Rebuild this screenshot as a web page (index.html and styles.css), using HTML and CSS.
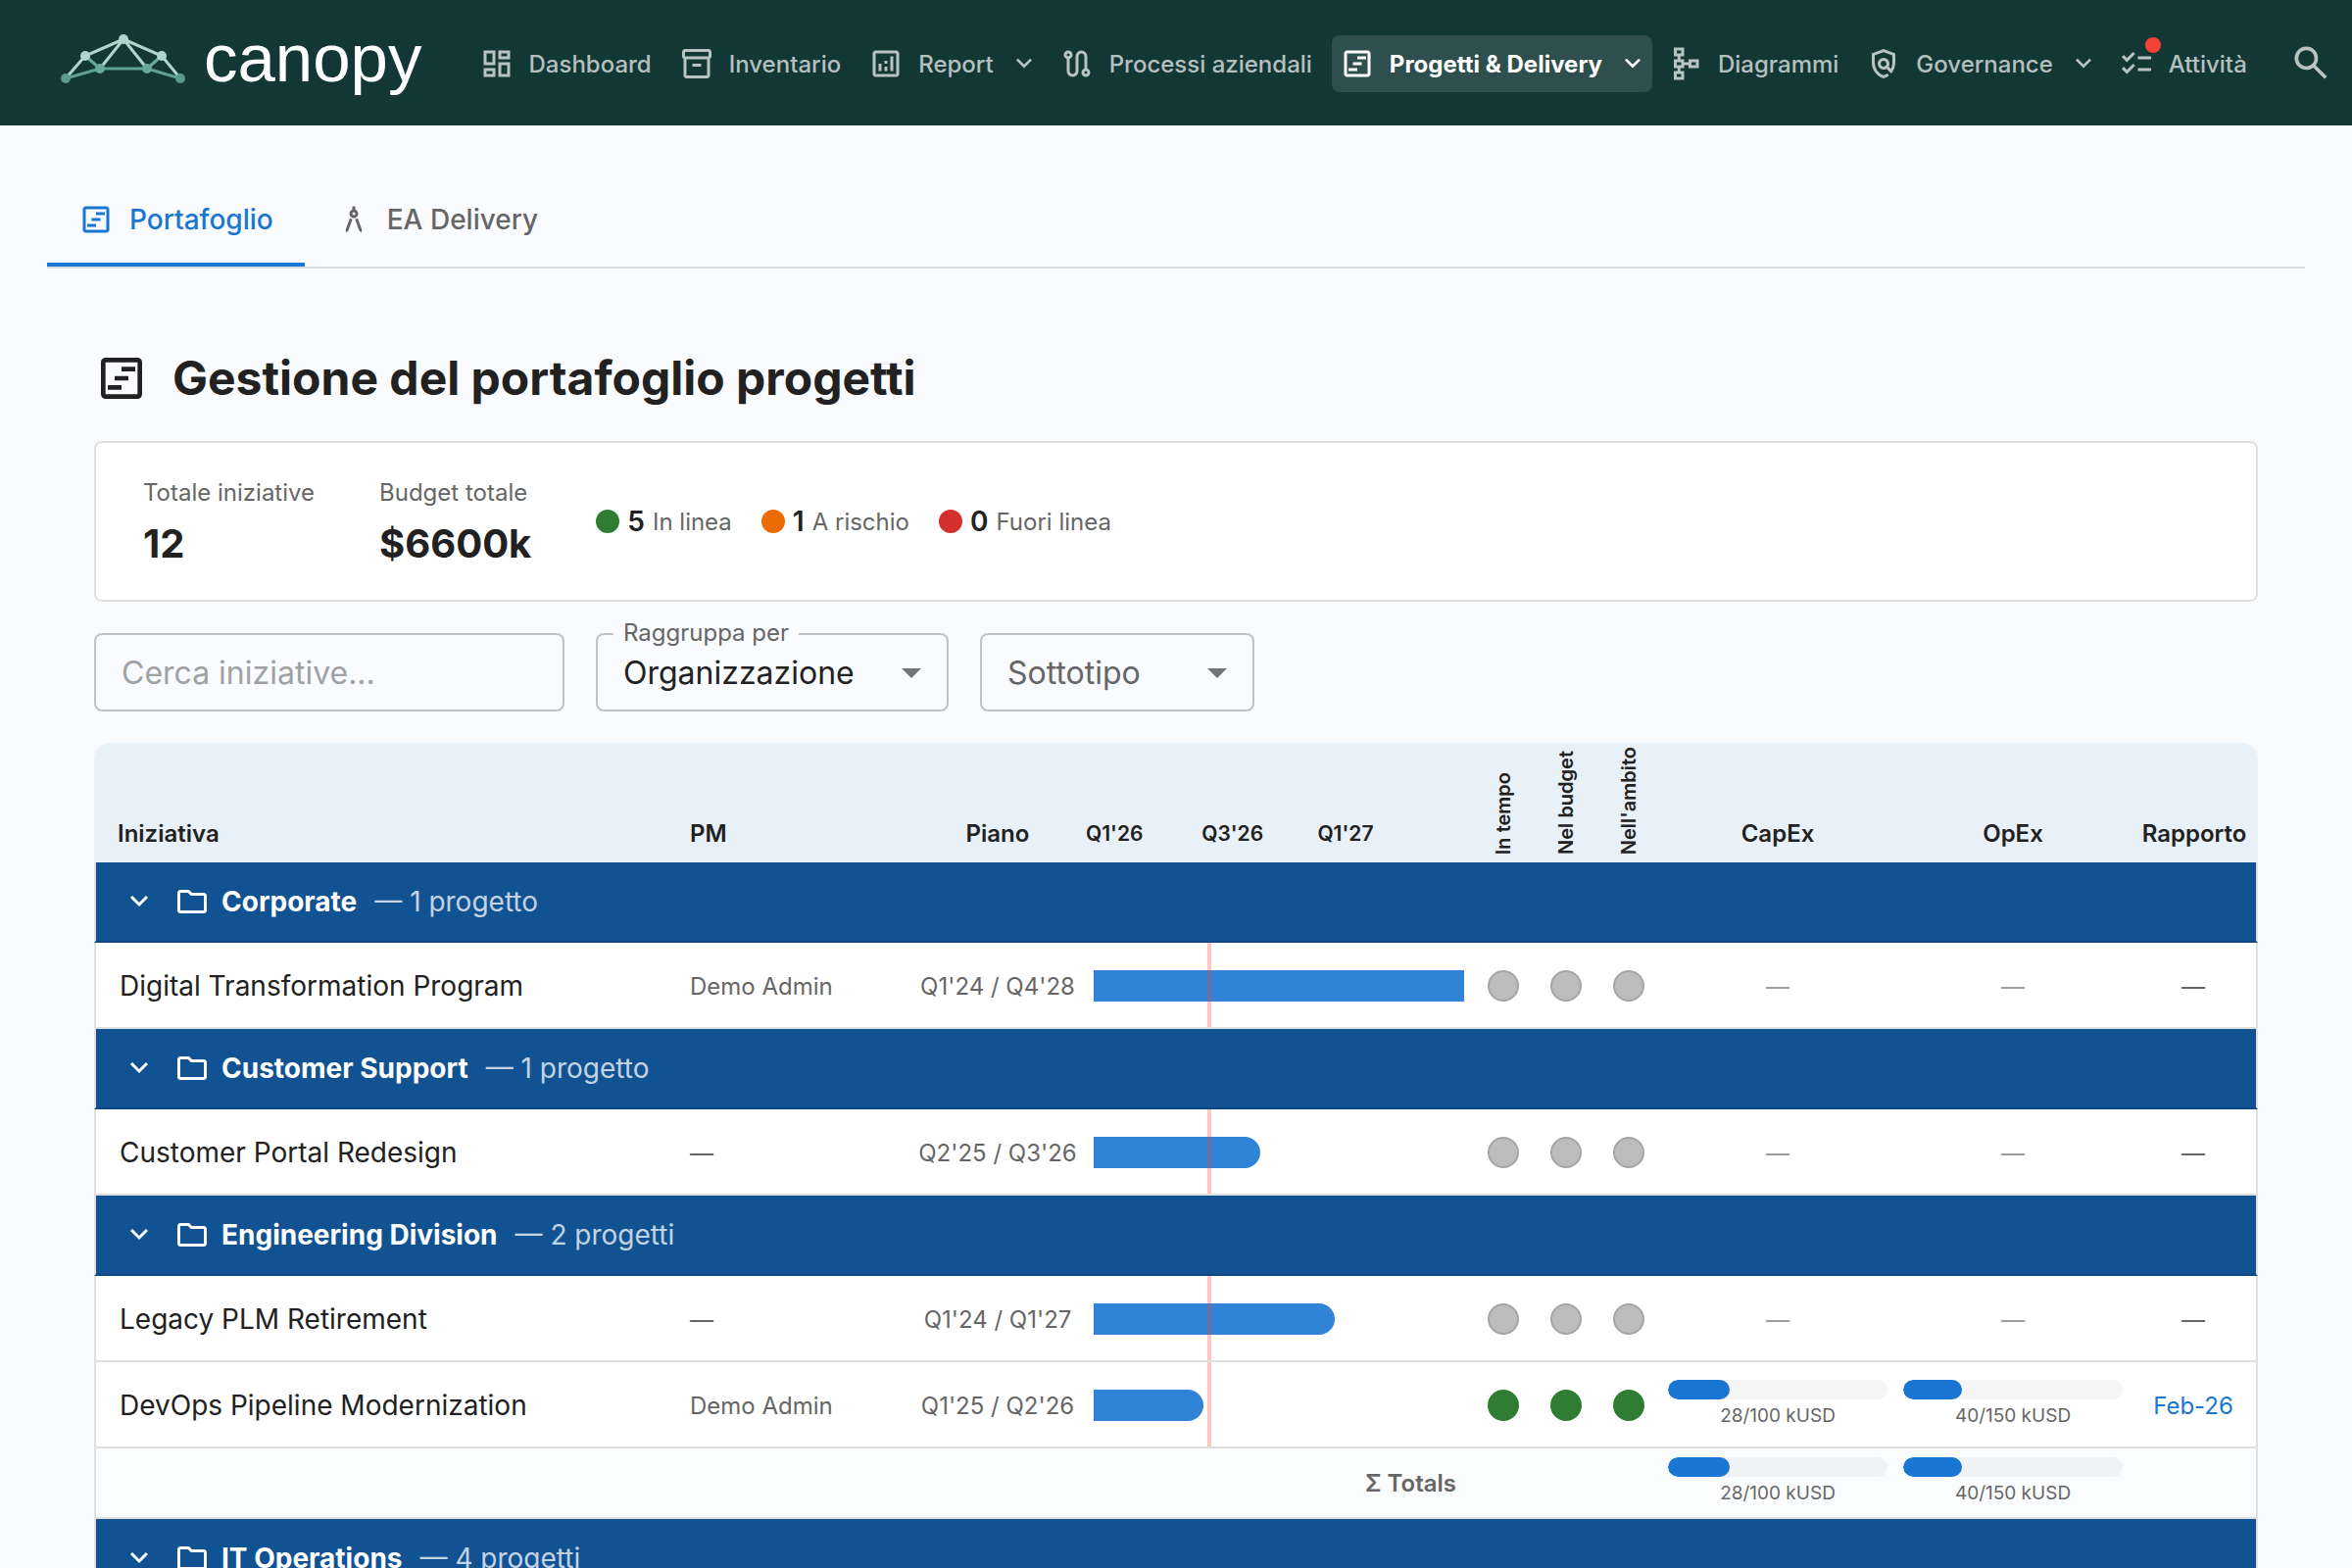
FILE: index.html
```html
<!DOCTYPE html>
<html lang="it">
<head>
    <meta charset="UTF-8">
    <meta name="viewport" content="width=device-width, initial-scale=1.0">
    <title>Canopy - Gestione del portafoglio progetti</title>
    <link rel="stylesheet" href="styles.css">
</head>
<body>
    <!-- shared icon shapes -->
    <svg class="sprite" aria-hidden="true">
        <symbol id="i-dashboard" viewBox="0 -960 960 960"><path d="M520-600v-240h320v240H520ZM120-440v-400h320v400H120Zm400 320v-400h320v400H520Zm-400 0v-240h320v240H120Zm80-400h160v-240H200v240Zm400 320h160v-240H600v240Zm0-480h160v-80H600v80ZM200-200h160v-80H200v80Z"/></symbol>
        <symbol id="i-inventory" viewBox="0 -960 960 960"><path d="M200-80q-33 0-56.5-23.5T120-160v-451q-18-11-29-28.5T80-680v-120q0-33 23.5-56.5T160-880h640q33 0 56.5 23.5T880-800v120q0 23-11 40.5T840-611v451q0 33-23.5 56.5T760-80H200Zm0-520v440h560v-440H200Zm-40-80h640v-120H160v120Zm200 280h240v-80H360v80Z"/></symbol>
        <symbol id="i-report" viewBox="0 -960 960 960"><path d="M280-280h80v-200h-80v200Zm320 0h80v-400h-80v400Zm-160 0h80v-120h-80v120Zm0-200h80v-80h-80v80ZM200-120q-33 0-56.5-23.5T120-200v-560q0-33 23.5-56.5T200-840h560q33 0 56.5 23.5T840-760v560q0 33-23.5 56.5T760-120H200Zm0-80h560v-560H200v560Z"/></symbol>
        <symbol id="i-route" viewBox="0 -960 960 960"><path d="M360-120q-66 0-113-47t-47-113v-327q-35-13-57.5-43.5T120-720q0-50 35-85t85-35q50 0 85 35t35 85q0 39-22.5 69.5T280-607v327q0 33 23.5 56.5T360-200q33 0 56.5-23.5T440-280v-400q0-66 47-113t113-47q66 0 113 47t47 113v327q35 13 57.5 43.5T840-240q0 50-35 85t-85 35q-50 0-85-35t-35-85q0-39 22.5-70t57.5-43v-327q0-33-23.5-56.5T600-760q-33 0-56.5 23.5T520-680v400q0 66-47 113t-113 47ZM240-680q17 0 28.5-11.5T280-720q0-17-11.5-28.5T240-760q-17 0-28.5 11.5T200-720q0 17 11.5 28.5T240-680Zm480 480q17 0 28.5-11.5T760-240q0-17-11.5-28.5T720-280q-17 0-28.5 11.5T680-240q0 17 11.5 28.5T720-200Z"/></symbol>
        <symbol id="i-timeline" viewBox="0 -960 960 960"><path d="M240-280h240v-80H240v80Zm120-160h240v-80H360v80Zm120-160h240v-80H480v80ZM200-120q-33 0-56.5-23.5T120-200v-560q0-33 23.5-56.5T200-840h560q33 0 56.5 23.5T840-760v560q0 33-23.5 56.5T760-120H200Zm0-80h560v-560H200v560Z"/></symbol>
        <symbol id="i-schema" viewBox="0 -960 960 960"><path d="M160-40v-240h100v-80H160v-240h100v-80H160v-240h280v240H340v80h100v80h120v-80h280v240H560v-80H440v80H340v80h100v240H160Zm80-80h120v-80H240v80Zm0-320h120v-80H240v80Zm400 0h120v-80H640v80ZM240-760h120v-80H240v80Z"/></symbol>
        <symbol id="i-policy" viewBox="0 -960 960 960"><path d="M480-80q-139-35-229.5-159.5T160-516v-244l320-120 320 120v244q0 85-29 163.5T688-214L560-342q-18 11-38.5 16.5T480-320q-66 0-113-47t-47-113q0-66 47-113t113-47q66 0 113 47t47 113q0 22-5.5 42.5T618-398l60 60q20-41 31-86t11-92v-189l-240-90-240 90v189q0 121 68 220t172 132q26-8 49.5-20.5T576-214l56 56q-33 27-71.5 47T480-80Zm0-320q33 0 56.5-23.5T560-480q0-33-23.5-56.5T480-560q-33 0-56.5 23.5T400-480q0 33 23.5 56.5T480-400Z"/></symbol>
        <symbol id="i-checklist" viewBox="0 -960 960 960"><path d="M222-200 80-342l56-56 85 85 170-170 56 57-225 226Zm0-320L80-662l56-56 85 85 170-170 56 57-225 226Zm298 240v-80h360v80H520Zm0-320v-80h360v80H520Z"/></symbol>
        <symbol id="i-search" viewBox="0 -960 960 960"><path d="M784-120 532-372q-30 24-69 38t-83 14q-109 0-184.5-75.5T120-580q0-109 75.5-184.5T380-840q109 0 184.5 75.5T640-580q0 44-14 83t-38 69l252 252-56 56ZM380-400q75 0 127.5-52.5T560-580q0-75-52.5-127.5T380-760q-75 0-127.5 52.5T200-580q0 75 52.5 127.5T380-400Z"/></symbol>
        <symbol id="i-chevron" viewBox="0 -960 960 960"><path d="M480-344 240-584l56-56 184 184 184-184 56 56-240 240Z"/></symbol>
        <symbol id="i-compass" viewBox="0 -960 960 960"><path d="m270-120-10-88 114-314q15 14 32.5 23.5T444-484L334-182l-64 62Zm420 0-64-62-110-302q20-5 37.5-14.5T586-522l114 314-10 88ZM480-520q-50 0-85-35t-35-85q0-39 22.5-69.5T440-752v-88h80v88q35 12 57.5 42.5T600-640q0 50-35 85t-85 35Zm0-80q17 0 28.5-11.5T520-640q0-17-11.5-28.5T480-680q-17 0-28.5 11.5T440-640q0 17 11.5 28.5T480-600Z"/></symbol>
        <symbol id="i-folder" viewBox="0 -960 960 960"><path d="M160-160q-33 0-56.5-23.5T80-240v-480q0-33 23.5-56.5T160-800h240l80 80h320q33 0 56.5 23.5T880-640v400q0 33-23.5 56.5T800-160H160Zm0-80h640v-400H447l-80-80H160v480Z"/></symbol>
    </svg>

    <header class="topbar">
        <a class="logo" href="#">
            <svg class="logo-mark" viewBox="0 0 132 60" aria-hidden="true">
                <g fill="none" stroke-width="3">
                    <path d="M27 27 42 40M105 27 90 40" stroke="#68a89f"/>
                    <path d="M7 50 42 40H90L124 50" stroke="#5fa197"/>
                    <path d="M7 50 27 27 66 10 105 27 124 50M66 10 42 40M66 10 90 40" stroke="#b0d4ce"/>
                </g>
                <circle cx="7" cy="50" r="5" fill="#5a9a90"/>
                <circle cx="124" cy="50" r="5" fill="#5a9a90"/>
                <circle cx="42" cy="40" r="5" fill="#68a89f"/>
                <circle cx="90" cy="40" r="5" fill="#68a89f"/>
                <circle cx="27" cy="27" r="5" fill="#b0d4ce"/>
                <circle cx="105" cy="27" r="5" fill="#b0d4ce"/>
                <circle cx="66" cy="10" r="5" fill="#b0d4ce"/>
            </svg>
            <span class="logo-text">canopy</span>
        </a>
        <nav class="nav">
            <a class="nav-item" href="#"><svg class="icon"><use href="#i-dashboard"/></svg>Dashboard</a>
            <a class="nav-item" href="#"><svg class="icon"><use href="#i-inventory"/></svg>Inventario</a>
            <button class="nav-item has-menu" type="button"><svg class="icon"><use href="#i-report"/></svg>Report<svg class="chevron"><use href="#i-chevron"/></svg></button>
            <a class="nav-item" href="#"><svg class="icon"><use href="#i-route"/></svg>Processi aziendali</a>
            <button class="nav-item has-menu active" type="button"><svg class="icon"><use href="#i-timeline"/></svg>Progetti &amp; Delivery<svg class="chevron"><use href="#i-chevron"/></svg></button>
            <a class="nav-item" href="#"><svg class="icon"><use href="#i-schema"/></svg>Diagrammi</a>
            <button class="nav-item has-menu" type="button"><svg class="icon"><use href="#i-policy"/></svg>Governance<svg class="chevron"><use href="#i-chevron"/></svg></button>
            <a class="nav-item" href="#"><span class="badge-wrap"><svg class="icon"><use href="#i-checklist"/></svg><span class="badge"></span></span>Attività</a>
        </nav>
        <button class="search-button" type="button" aria-label="Cerca"><svg><use href="#i-search"/></svg></button>
    </header>

    <main class="page">
        <div class="tabs" role="tablist">
            <button class="tab selected" type="button" role="tab" aria-selected="true"><svg class="icon"><use href="#i-timeline"/></svg>Portafoglio</button>
            <button class="tab" type="button" role="tab" aria-selected="false"><svg class="icon"><use href="#i-compass"/></svg>EA Delivery</button>
        </div>

        <section class="content">
            <h1 class="title"><svg class="title-icon"><use href="#i-timeline"/></svg>Gestione del portafoglio progetti</h1>

            <div class="summary">
                <div class="stat">
                    <div class="stat-label">Totale iniziative</div>
                    <div class="stat-value">12</div>
                </div>
                <div class="stat">
                    <div class="stat-label">Budget totale</div>
                    <div class="stat-value">$6600k</div>
                </div>
                <div class="health">
                    <div class="health-item"><span class="dot green"></span><strong>5</strong><span>In linea</span></div>
                    <div class="health-item"><span class="dot orange"></span><strong>1</strong><span>A rischio</span></div>
                    <div class="health-item"><span class="dot red"></span><strong>0</strong><span>Fuori linea</span></div>
                </div>
            </div>

            <form class="filters">
                <input class="field search" type="text" placeholder="Cerca iniziative..." aria-label="Cerca iniziative">
                <div class="select-wrap group-by">
                    <label class="float-label" for="groupBy">Raggruppa per</label>
                    <select class="field" id="groupBy">
                        <option>Organizzazione</option>
                    </select>
                </div>
                <div class="select-wrap subtype">
                    <select class="field muted" id="subtype" aria-label="Sottotipo">
                        <option>Sottotipo</option>
                    </select>
                </div>
            </form>

            <table class="portfolio">
                <colgroup>
                    <col>
                    <col class="col-pm">
                    <col class="col-plan">
                    <col class="col-time">
                    <col class="col-rag">
                    <col class="col-rag">
                    <col class="col-rag">
                    <col class="col-cost">
                    <col class="col-cost">
                    <col class="col-report">
                </colgroup>
                <thead>
                    <tr>
                        <th class="name">Iniziativa</th>
                        <th class="pm">PM</th>
                        <th>Piano</th>
                        <th class="quarters"><div class="scale"><span>Q1'26</span><span>Q3'26</span><span>Q1'27</span></div></th>
                        <th class="rag"><span class="vertical">In tempo</span></th>
                        <th class="rag"><span class="vertical">Nel budget</span></th>
                        <th class="rag"><span class="vertical">Nell'ambito</span></th>
                        <th>CapEx</th>
                        <th>OpEx</th>
                        <th>Rapporto</th>
                    </tr>
                </thead>
                <tbody>
                    <tr class="group">
                        <td colspan="10"><button class="group-toggle" type="button"><svg class="icon"><use href="#i-chevron"/></svg><svg class="icon folder"><use href="#i-folder"/></svg><strong>Corporate</strong><span class="count">— 1 progetto</span></button></td>
                    </tr>
                    <tr class="project">
                        <td class="name">Digital Transformation Program</td>
                        <td class="pm">Demo Admin</td>
                        <td class="plan">Q1'24 / Q4'28</td>
                        <td class="timeline"><div class="track"><div class="bar open" style="width: 100%"></div><div class="today" style="left: 30.7%"></div></div></td>
                        <td class="rag"><span class="status"></span></td>
                        <td class="rag"><span class="status"></span></td>
                        <td class="rag"><span class="status"></span></td>
                        <td class="cost empty">—</td>
                        <td class="cost empty">—</td>
                        <td class="report">—</td>
                    </tr>
                    <tr class="group">
                        <td colspan="10"><button class="group-toggle" type="button"><svg class="icon"><use href="#i-chevron"/></svg><svg class="icon folder"><use href="#i-folder"/></svg><strong>Customer Support</strong><span class="count">— 1 progetto</span></button></td>
                    </tr>
                    <tr class="project">
                        <td class="name">Customer Portal Redesign</td>
                        <td class="pm">—</td>
                        <td class="plan">Q2'25 / Q3'26</td>
                        <td class="timeline"><div class="track"><div class="bar" style="width: 45%"></div><div class="today" style="left: 30.7%"></div></div></td>
                        <td class="rag"><span class="status"></span></td>
                        <td class="rag"><span class="status"></span></td>
                        <td class="rag"><span class="status"></span></td>
                        <td class="cost empty">—</td>
                        <td class="cost empty">—</td>
                        <td class="report">—</td>
                    </tr>
                    <tr class="group">
                        <td colspan="10"><button class="group-toggle" type="button"><svg class="icon"><use href="#i-chevron"/></svg><svg class="icon folder"><use href="#i-folder"/></svg><strong>Engineering Division</strong><span class="count">— 2 progetti</span></button></td>
                    </tr>
                    <tr class="project">
                        <td class="name">Legacy PLM Retirement</td>
                        <td class="pm">—</td>
                        <td class="plan">Q1'24 / Q1'27</td>
                        <td class="timeline"><div class="track"><div class="bar" style="width: 65.1%"></div><div class="today" style="left: 30.7%"></div></div></td>
                        <td class="rag"><span class="status"></span></td>
                        <td class="rag"><span class="status"></span></td>
                        <td class="rag"><span class="status"></span></td>
                        <td class="cost empty">—</td>
                        <td class="cost empty">—</td>
                        <td class="report">—</td>
                    </tr>
                    <tr class="project">
                        <td class="name">DevOps Pipeline Modernization</td>
                        <td class="pm">Demo Admin</td>
                        <td class="plan">Q1'25 / Q2'26</td>
                        <td class="timeline"><div class="track"><div class="bar" style="width: 29.7%"></div><div class="today" style="left: 30.7%"></div></div></td>
                        <td class="rag"><span class="status on"></span></td>
                        <td class="rag"><span class="status on"></span></td>
                        <td class="rag"><span class="status on"></span></td>
                        <td class="cost"><div class="meter"><div class="meter-fill" style="width: 28%"></div></div><div class="meter-text">28/100 kUSD</div></td>
                        <td class="cost"><div class="meter"><div class="meter-fill" style="width: 26.7%"></div></div><div class="meter-text">40/150 kUSD</div></td>
                        <td class="report"><a href="#">Feb-26</a></td>
                    </tr>
                    <tr class="totals">
                        <td class="totals-label" colspan="4">Σ Totals</td>
                        <td colspan="3"></td>
                        <td class="cost"><div class="meter"><div class="meter-fill" style="width: 28%"></div></div><div class="meter-text">28/100 kUSD</div></td>
                        <td class="cost"><div class="meter"><div class="meter-fill" style="width: 26.7%"></div></div><div class="meter-text">40/150 kUSD</div></td>
                        <td></td>
                    </tr>
                    <tr class="group">
                        <td colspan="10"><button class="group-toggle" type="button"><svg class="icon"><use href="#i-chevron"/></svg><svg class="icon folder"><use href="#i-folder"/></svg><strong>IT Operations</strong><span class="count">— 4 progetti</span></button></td>
                    </tr>
                </tbody>
            </table>
        </section>
    </main>
</body>
</html>
```
FILE: styles.css
```css
* { box-sizing: border-box; }
body { margin: 0; height: 100vh; overflow: hidden; font-family: Inter, sans-serif; font-size: 28px; color: #212121; background: #fafbfe; }
button { font: inherit; color: inherit; background: none; border: none; padding: 0; cursor: pointer; }
a { color: inherit; text-decoration: none; }
svg { fill: currentColor; flex-shrink: 0; display: block; }
.sprite { position: absolute; width: 0; height: 0; }
.icon { width: 36px; height: 36px; }

/* top bar */
.topbar { display: flex; align-items: center; height: 128px; padding: 0 12px 0 60px; background: #123735; color: #fff; }
.logo { display: flex; align-items: center; gap: 16px; padding-bottom: 8px; }
.logo-mark { width: 132px; height: 60px; }
.logo-text { font-family: "Liberation Sans", Arial, sans-serif; font-size: 69px; line-height: 80px; }
.nav { display: flex; gap: 8px; margin-left: 50px; padding-top: 2px; white-space: nowrap; }
.nav-item { display: flex; align-items: center; gap: 15px; height: 58px; padding: 0 12px 0 8px; border-radius: 8px; font-size: 24px; font-weight: 500; color: rgba(255, 255, 255, 0.7); }
.nav-item.has-menu { padding-right: 4px; }
.nav-item.active { background: rgba(255, 255, 255, 0.12); color: #fff; font-weight: 700; }
.chevron { width: 32px; height: 32px; }
.badge-wrap { position: relative; }
.badge { position: absolute; top: -9px; right: -7px; width: 16px; height: 16px; border-radius: 50%; background: #f44336; }
.search-button { margin-left: auto; padding: 8px; color: rgba(255, 255, 255, 0.7); }
.search-button svg { width: 44px; height: 44px; }

/* tabs */
.page { padding: 48px 48px 0; }
.tabs { display: flex; border-bottom: 2px solid #dcdde0; }
.tab { display: flex; align-items: center; gap: 16px; height: 96px; padding: 4px 32px 0; border-bottom: 4px solid transparent; font-weight: 500; color: #666; }
.tab.selected { color: #1976d2; border-bottom-color: #1976d2; }

/* page content */
.content { padding: 76px 48px 0; }
.title { display: flex; align-items: center; gap: 24px; margin: 0 0 28px; font-size: 48px; font-weight: 700; line-height: 72px; }
.title-icon { width: 56px; height: 56px; }

.summary { display: flex; gap: 66px; padding: 28px 48px; margin-bottom: 32px; background: #fff; border: 2px solid #e0e0e0; border-radius: 8px; }
.stat-label { font-size: 24px; line-height: 46px; color: #666; }
.stat-value { font-size: 40px; font-weight: 700; line-height: 58px; }
.health { display: flex; align-items: center; gap: 30px; }
.health-item { display: flex; align-items: center; gap: 8px; font-size: 24px; color: #666; }
.health-item strong { font-size: 28px; font-weight: 600; color: #212121; }
.dot { width: 24px; height: 24px; border-radius: 50%; }
.dot.green { background: #2e7d32; }
.dot.orange { background: #ed6c02; }
.dot.red { background: #d32f2f; }

/* filters */
.filters { display: flex; gap: 32px; margin-bottom: 32px; }
.field { width: 100%; height: 80px; padding: 0 26px; font-family: inherit; font-size: 32px; color: #212121; background: transparent; border: 2px solid #c1c2c4; border-radius: 8px; appearance: none; }
.field::placeholder { color: #a0a1a3; }
.field.search { width: 480px; }
.field.muted { color: #666; }
.select-wrap { position: relative; }
.select-wrap::after { content: ""; position: absolute; right: 28px; top: 36px; border: 10px solid transparent; border-top-color: #737475; border-bottom: none; pointer-events: none; }
.group-by { width: 360px; }
.subtype { width: 280px; }
.float-label { position: absolute; left: 18px; top: -18px; padding: 0 10px; font-size: 24px; line-height: 36px; color: #666; background: #fafbfe; }

/* portfolio table */
.portfolio { width: 100%; table-layout: fixed; border-collapse: separate; border-spacing: 0; border-radius: 16px 16px 0 0; overflow: hidden; }
.col-pm { width: 232px; }
.col-plan { width: 180px; }
.col-time { width: 394px; }
.col-rag { width: 64px; }
.col-cost { width: 240px; }
.col-report { width: 130px; }

.portfolio th { height: 122px; padding: 0 4px 12px; vertical-align: bottom; font-size: 24px; font-weight: 600; line-height: 34px; background: #e8f0f8; white-space: nowrap; }
.portfolio th.name { padding-left: 24px; text-align: left; }
.portfolio th.pm { padding-left: 8px; text-align: left; }
.portfolio th.quarters { padding-left: 0; padding-right: 0; }
.scale { display: flex; font-size: 21px; text-align: left; }
.scale span { width: 30%; }
.portfolio th.rag { padding: 0 0 8px; }
.vertical { display: block; margin: 0 auto; width: 34px; font-size: 20px; writing-mode: vertical-rl; transform: rotate(180deg); }

.portfolio td { padding: 0 8px; }
.portfolio tbody td:first-child { border-left: 2px solid #e0e0e0; }
.portfolio tbody td:last-child { border-right: 2px solid #e0e0e0; }

.group td { height: 82px; padding: 0; background: #115293; color: #fff; border-bottom: 2px solid #0d4785; }
.group-toggle { display: flex; align-items: center; width: 100%; height: 80px; padding-left: 26px; }
.group-toggle .folder { margin: 0 12px 0 18px; }
.group-toggle strong { font-weight: 700; }
.count { margin-left: 18px; color: rgba(255, 255, 255, 0.75); }

.project td { height: 88px; padding-top: 2px; background: #fff; border-bottom: 2px solid #e0e0e0; }
.portfolio .project .name { padding-left: 24px; }
.pm, .plan, .report { font-size: 24px; }
td.pm, td.plan, td.report { color: #666; }
.plan, .report, .cost, .rag { text-align: center; white-space: nowrap; }
.report a { color: #1976d2; }
.cost.empty { font-size: 24px; color: #9e9e9e; }

.project td.timeline { padding-top: 0; padding-bottom: 0; }
.track { position: relative; display: flex; align-items: center; height: 86px; padding-top: 2px; }
.bar { height: 32px; background: #1976d2; opacity: 0.9; border-radius: 0 16px 16px 0; }
.bar.open { border-radius: 0; }
.today { position: absolute; top: 0; bottom: 0; width: 4px; background: rgba(244, 67, 54, 0.3); }

.status { display: block; width: 32px; height: 32px; margin: 0 auto; border-radius: 50%; background: #bdbdbd; border: 2px solid #a5a5a5; }
.status.on { background: #2e7d32; border-color: #2e7d32; }

.meter { height: 20px; border-radius: 10px; background: rgba(0, 0, 0, 0.04); overflow: hidden; }
.meter-fill { height: 100%; border-radius: 10px; background: #1976d2; }
.meter-text { margin-top: 2px; font-size: 19px; line-height: 30px; color: #666; }

.totals td { height: 72px; border-bottom: 2px solid #e0e0e0; background: #fbfcfe; }
.totals .totals-label { padding-right: 16px; text-align: right; font-size: 24px; font-weight: 600; color: #666; }
```
